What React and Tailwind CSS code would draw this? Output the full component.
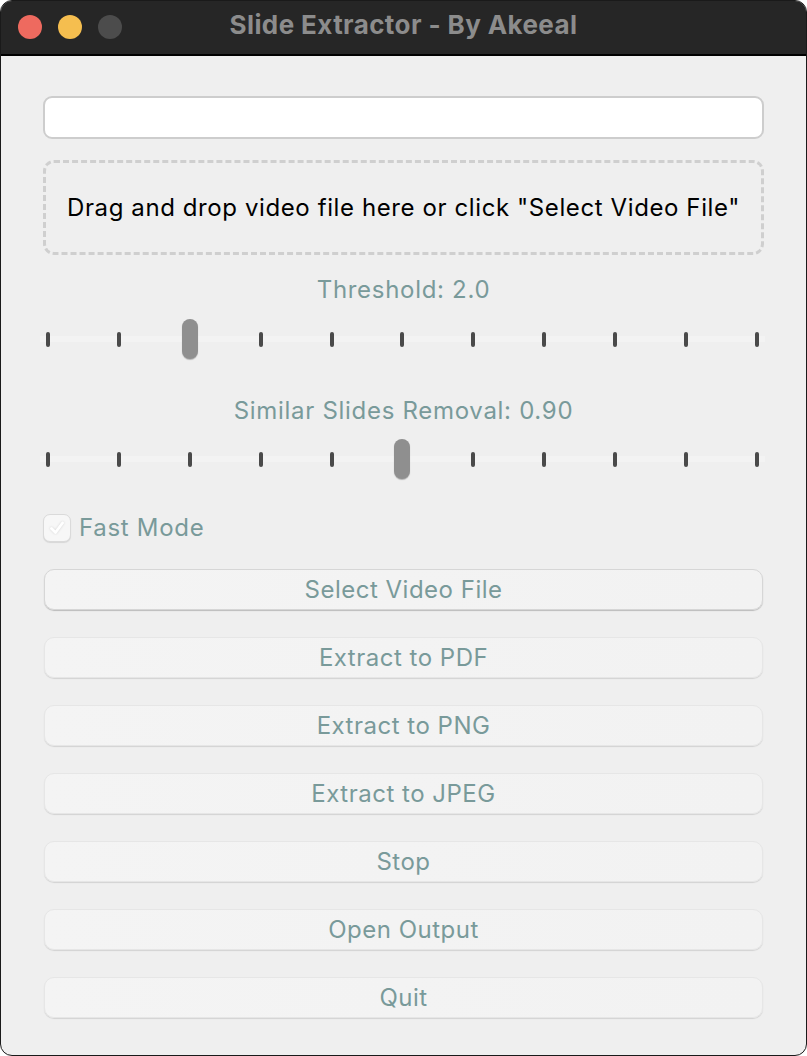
import React from 'react';

const FONT = { fontFamily: 'Inter, "Noto Sans", sans-serif' };

// A tick slider: 11 slots, one of them holds the thumb
const TickSlider = ({ thumbAt }) => (
  <div className="relative h-[40px] ml-[-3px] mr-[-1px]">
    <div className="absolute left-0 right-0 top-[17px] h-[6px] bg-[#f3f3f3]" />
    <div className="relative flex justify-between items-center h-full">
      {Array.from({ length: 11 }).map((_, i) => (
        <div key={i} className="w-4 h-full flex items-center justify-center">
          {i === thumbAt ? (
            <div className="w-[16px] h-[40px] rounded-full bg-[#8f8f8f] shadow-[0_1px_1px_rgba(0,0,0,0.25)]" />
          ) : (
            <div className="w-[4px] h-[15px] rounded-full bg-[#4a4a4a]" />
          )}
        </div>
      ))}
    </div>
  </div>
);

const Button = ({ label, primary }) => (
  <button
    className={`h-[41px] w-full rounded-[10px] bg-gradient-to-r from-[#f4f4f4] to-[#f2f2f2] text-[24px] tracking-[0.5px] text-[#799a9a] flex items-center justify-center ${
      primary
        ? 'border border-[#d6d6d6] shadow-[0_1px_1px_rgba(0,0,0,0.22)]'
        : 'border border-[#e6e6e6] shadow-[0_1px_1px_rgba(0,0,0,0.12)]'
    }`}
  >
    {label}
  </button>
);

const App = () => {
  const buttons = ['Extract to PDF', 'Extract to PNG', 'Extract to JPEG', 'Stop', 'Open Output', 'Quit'];

  return (
    <div style={FONT} className="w-[807px] h-[1056px] bg-white">
      <div className="w-[807px] h-[1056px] rounded-[12px] border border-[#1a1a1a] overflow-hidden bg-[#efefef] flex flex-col">
        {/* title bar */}
        <div className="h-[55px] shrink-0 bg-[#262626] border-b-2 border-black relative flex items-center justify-center">
          <div className="absolute left-[17px] top-[14px] flex gap-[16px]">
            <div className="w-[24px] h-[24px] rounded-full bg-[#ee6a5f]" />
            <div className="w-[24px] h-[24px] rounded-full bg-[#f5be4f]" />
            <div className="w-[24px] h-[24px] rounded-full bg-[#4c4c4c]" />
          </div>
          <span className="text-[26px] font-bold text-[#8c8c8c] tracking-[0.4px] mt-[-6px]">Slide Extractor - By Akeeal</span>
        </div>

        {/* body */}
        <div className="px-[42px] pt-[40px] flex flex-col">
          <div className="h-[43px] rounded-[9px] bg-white border-2 border-[#cdcdcd]" />

          <div className="mt-[21px] h-[95px] rounded-[11px] border-[3px] border-dashed border-[#cfcfcf] flex items-center justify-center">
            <span className="text-[24px] text-black tracking-[0.6px]">Drag and drop video file here or click "Select Video File"</span>
          </div>

          <div className="mt-[20px] h-[30px] flex items-center justify-center text-[24px] tracking-[0.7px] text-[#799a9a]">Threshold: 2.0</div>
          <div className="mt-[14px]">
            <TickSlider thumbAt={2} />
          </div>

          <div className="mt-[37px] h-[30px] flex items-center justify-center text-[24px] tracking-[0.7px] text-[#799a9a]">Similar Slides Removal: 0.90</div>
          <div className="mt-[13px]">
            <TickSlider thumbAt={5} />
          </div>

          <div className="mt-[35px] flex items-center gap-[8px] h-[28px]">
            <div className="w-[28px] h-[28px] rounded-[7px] border border-[#dadada] bg-[#f7f7f7] shadow-[0_1px_1px_rgba(0,0,0,0.1)] flex items-center justify-center">
              <svg width="18" height="18" viewBox="0 0 18 18" fill="none">
                <path d="M3.5 9.5 L7.5 13.5 L14.5 4" stroke="#ffffff" strokeWidth="2.8" strokeLinecap="round" strokeLinejoin="round" style={{ filter: 'drop-shadow(0 0 1px rgba(0,0,0,0.15))' }} />
              </svg>
            </div>
            <span className="text-[24px] tracking-[0.7px] text-[#799a9a]">Fast Mode</span>
          </div>

          <div className="mt-[27px] flex flex-col gap-[27px] px-[1px]">
            <Button label="Select Video File" primary />
            {buttons.map((b) => (
              <Button key={b} label={b} />
            ))}
          </div>
        </div>
      </div>
    </div>
  );
};

export default App;
